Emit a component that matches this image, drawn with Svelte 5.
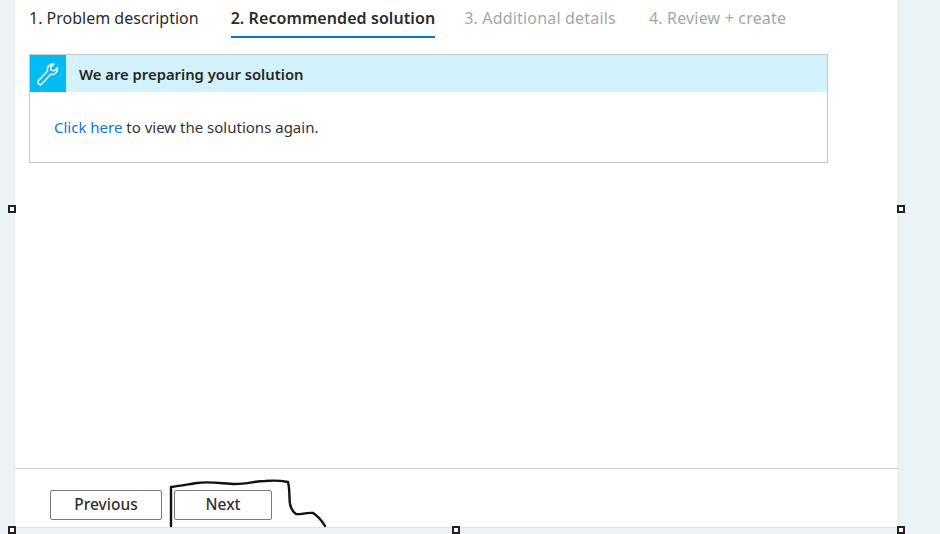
<script lang="ts">
  // wizard step screenshot with selection handles and a hand-drawn mark on top
  const steps = [
    { label: '1. Problem description', state: 'done' },
    { label: '2. Recommended solution', state: 'active' },
    { label: '3. Additional details', state: 'todo' },
    { label: '4. Review + create', state: 'todo' },
  ];
  const handles = [
    [12, 209], [901, 209], [12, 530], [456, 530], [901, 530],
  ];
</script>

<div class="page">
  <main class="panel">
    <nav class="tabs">
      {#each steps as step}
        <span class="tab {step.state}">{step.label}</span>
      {/each}
    </nav>

    <section class="card">
      <header class="card-head">
        <span class="card-icon">
          <svg width="22" height="24" viewBox="0 0 22 24" fill="none" stroke="#fff" stroke-width="1.5" stroke-linejoin="round">
            <path d="M14.2 2.2 a5.6 5.6 0 0 0 -3.6 6.9 L1.7 18.6 a2.3 2.3 0 0 0 3.4 3.2 L13.6 12.3 a5.6 5.6 0 0 0 6.9 -4.6 l0 -2 -3.6 3.2 -3 -1 -0.4 -2.8 3.4 -3 z" />
          </svg>
        </span>
        <h2>We are preparing your solution</h2>
      </header>
      <p class="card-body"><a href="#top">Click here</a> to view the solutions again.</p>
    </section>

    <footer class="actions">
      <button>Previous</button>
      <button class="next">Next</button>
    </footer>
  </main>

  {#each handles as [x, y]}
    <i class="handle" style="left:{x - 4}px;top:{y - 4}px"></i>
  {/each}

  <svg class="scribble" width="340" height="60" viewBox="0 0 340 60" fill="none" stroke="#111" stroke-width="2.4" stroke-linecap="round" stroke-linejoin="round">
    <path d="M171 52 L171 13 C180 12 190 10 197 9 C210 7 225 10 235 10 C248 10 255 7 265 7 C275 6 283 7 288 8 C290 16 289 24 290 30 C291 35 293 38 296 40 C300 41 307 38 313 39 C318 42 322 47 325 52" />
  </svg>
</div>

<style>
  :global(body) {
    margin: 0;
    background: #ebf3f7;
  }

  .page {
    position: relative;
    width: 940px;
    height: 534px;
    overflow: hidden;
    font-family: "Noto Sans", "Open Sans", sans-serif;
    color: #2b2b2b;
  }

  .panel {
    display: flex;
    flex-direction: column;
    box-sizing: border-box;
    width: 883px;
    height: 527px;
    margin-left: 15px;
    background: #fff;
    box-shadow: -1px 0 0 #e4e9ee, 1px 0 0 #e4e9ee, 0 1px 0 #dfe3e7;
  }

  /* steps */
  .tabs {
    display: flex;
    gap: 32px;
    height: 38px;
    padding-left: 14px;
    font-size: 16px;
  }
  .tab {
    box-sizing: border-box;
    height: 38px;
    line-height: 37px;
    white-space: nowrap;
  }
  .tab.active {
    font-weight: 600;
    letter-spacing: 0.08px;
    margin-right: -3px;
    border-bottom: 2px solid #0078d4;
  }
  .tab.todo {
    color: #a6a6a6;
    letter-spacing: 0.18px;
  }
  .tab.todo + .tab.todo { margin-left: 1px; }

  /* card */
  .card {
    box-sizing: border-box;
    width: 799px;
    height: 109px;
    margin: 16px 0 0 14px;
    border: 1px solid #c8c8c8;
  }
  .card-head {
    display: flex;
    align-items: center;
    height: 37px;
    background: #d2f2fc;
  }
  .card-icon {
    display: flex;
    align-items: center;
    justify-content: center;
    width: 36px;
    height: 37px;
    background: #00bcf2;
  }
  .card-head h2 {
    margin: 0 0 0 13px;
    font-size: 14.8px;
    font-weight: 600;
    color: #262626;
  }
  .card-body {
    margin: 23px 0 0 24px;
    font-size: 15px;
    line-height: 24px;
    color: #333;
  }
  .card-body a {
    color: #0f78d0;
    text-decoration: none;
  }

  /* footer */
  .actions {
    display: flex;
    gap: 12px;
    margin-top: auto;
    height: 59px;
    padding: 21px 0 0 35px;
    box-sizing: border-box;
    border-top: 1px solid #d0d0d0;
  }
  button {
    box-sizing: border-box;
    width: 112px;
    height: 30px;
    padding: 0 0 2px;
    background: #fff;
    border: 1px solid #7a7a7a;
    border-radius: 2px;
    font: 500 15.5px "Noto Sans", "Open Sans", sans-serif;
    color: #2f2f2f;
  }
  button.next { width: 98px; }

  /* overlays */
  .handle {
    position: absolute;
    box-sizing: border-box;
    width: 8px;
    height: 8px;
    background: #fff;
    border: 2px solid #222;
  }
  .scribble {
    position: absolute;
    left: 0;
    top: 474px;
  }
</style>
